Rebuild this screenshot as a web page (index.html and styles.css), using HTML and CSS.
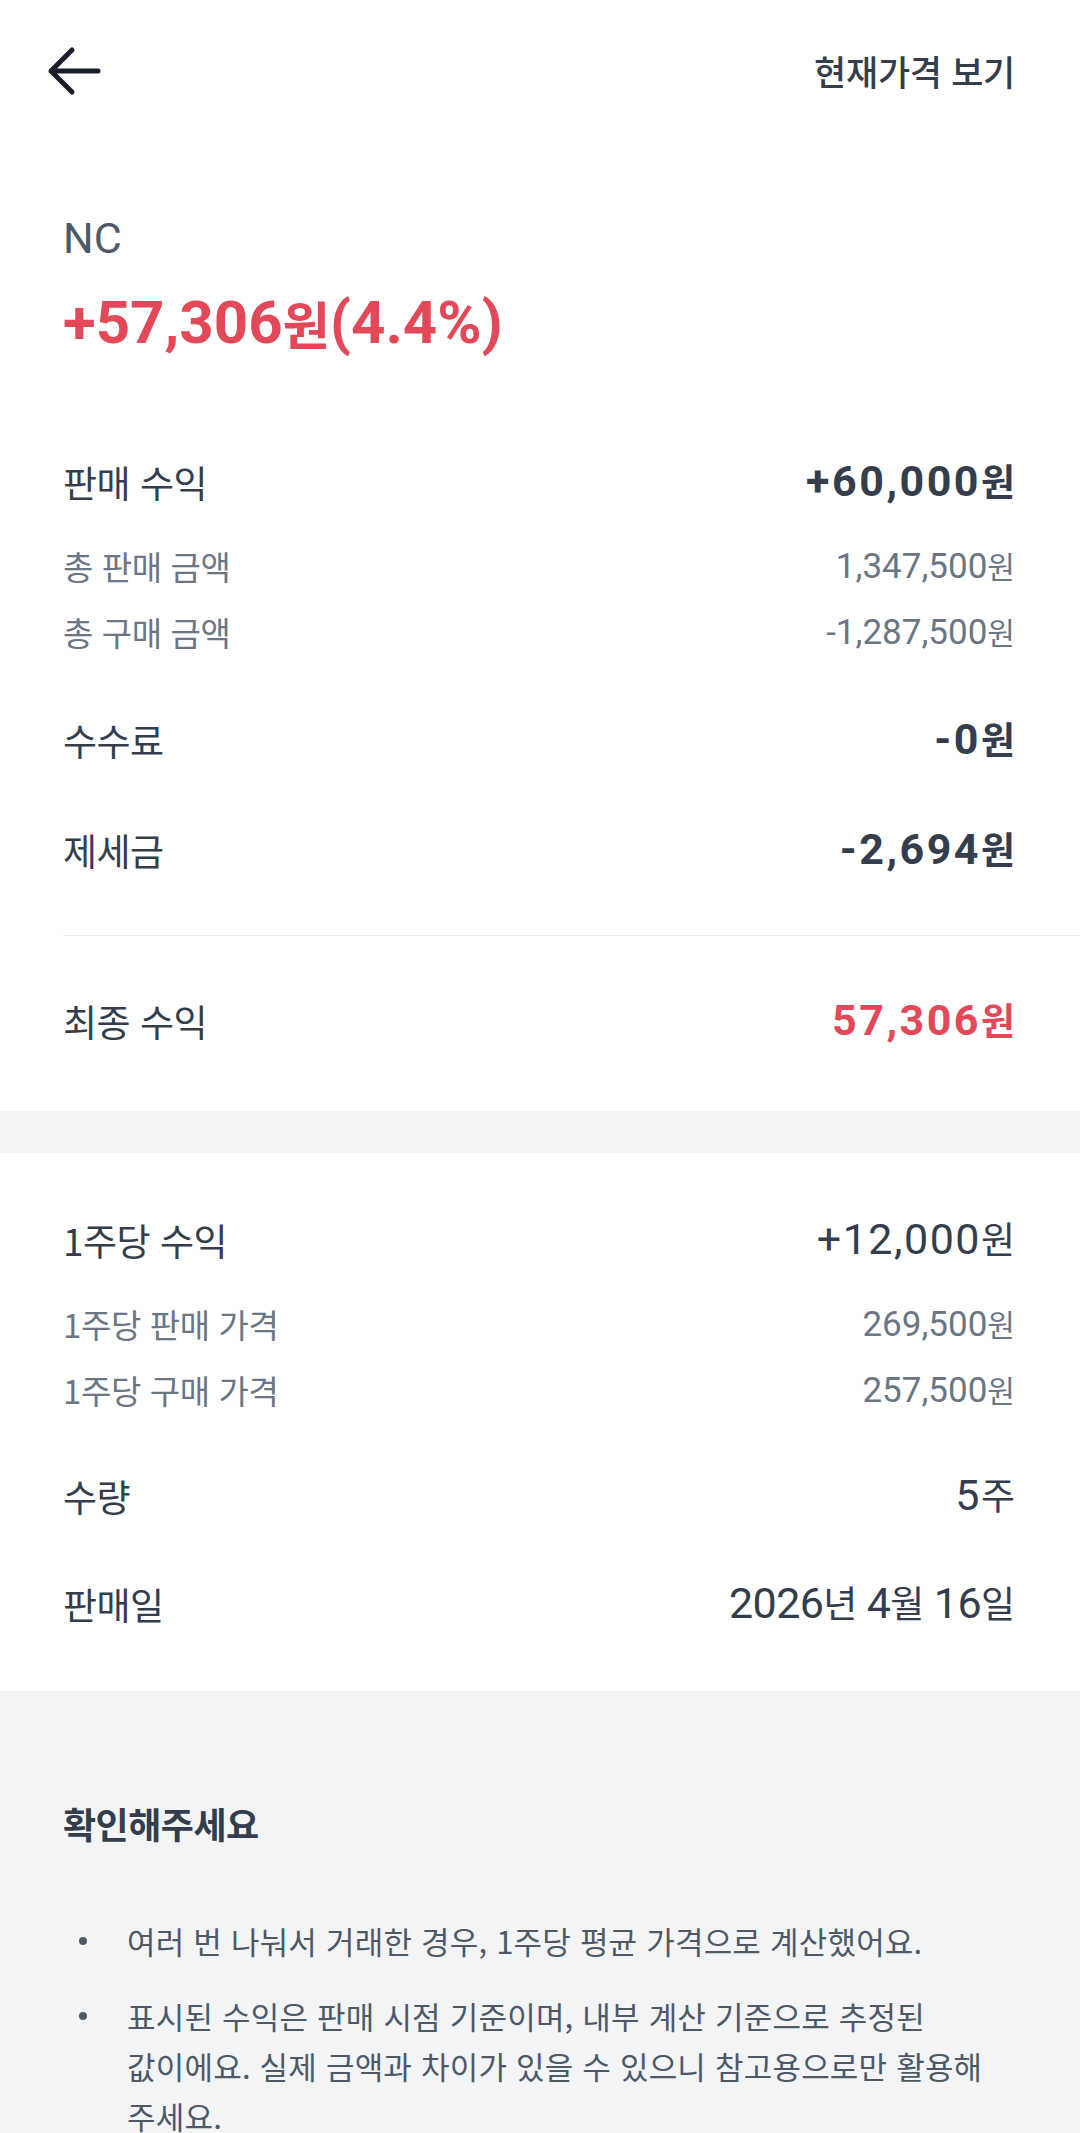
FILE: index.html
```html
<!DOCTYPE html>
<html lang="ko">
<head>
<meta charset="utf-8">
<title>판매 수익</title>
<link rel="stylesheet" href="styles.css">
</head>
<body>
<div class="page">
  <header class="topbar">
    <button class="back" type="button" aria-label="뒤로 가기">
      <svg width="60" height="60" viewBox="0 0 60 60" aria-hidden="true">
        <path d="M54 30H7M28 9L7 30l21 21" fill="none" stroke="#191f28" stroke-width="5" stroke-linecap="round" stroke-linejoin="round"/>
      </svg>
    </button>
    <span class="topbar-link">현재가격 보기</span>
  </header>

  <section class="summary">
    <div class="stock-name">NC</div>
    <div class="total-profit">+57,306<span class="unit">원</span>(4.4%)</div>
  </section>

  <section class="card">
    <div class="group">
      <div class="row row--main">
        <span class="label">판매 수익</span>
        <span class="value value--strong">+60,000<span class="unit">원</span></span>
      </div>
      <div class="subrows">
        <div class="row row--sub">
          <span class="label">총 판매 금액</span>
          <span class="value">1,347,500<span class="unit">원</span></span>
        </div>
        <div class="row row--sub">
          <span class="label">총 구매 금액</span>
          <span class="value">-1,287,500<span class="unit">원</span></span>
        </div>
      </div>
    </div>
    <div class="row row--main">
      <span class="label">수수료</span>
      <span class="value value--strong">-0<span class="unit">원</span></span>
    </div>
    <div class="row row--main">
      <span class="label">제세금</span>
      <span class="value value--strong">-2,694<span class="unit">원</span></span>
    </div>
    <div class="divider"></div>
    <div class="row row--main">
      <span class="label">최종 수익</span>
      <span class="value value--strong value--red">57,306<span class="unit">원</span></span>
    </div>
  </section>

  <section class="card card--second">
    <div class="group">
      <div class="row row--main">
        <span class="label">1주당 수익</span>
        <span class="value">+12,000<span class="unit">원</span></span>
      </div>
      <div class="subrows">
        <div class="row row--sub">
          <span class="label">1주당 판매 가격</span>
          <span class="value">269,500<span class="unit">원</span></span>
        </div>
        <div class="row row--sub">
          <span class="label">1주당 구매 가격</span>
          <span class="value">257,500<span class="unit">원</span></span>
        </div>
      </div>
    </div>
    <div class="row row--main">
      <span class="label">수량</span>
      <span class="value">5<span class="unit">주</span></span>
    </div>
    <div class="row row--main">
      <span class="label">판매일</span>
      <span class="value value--date">2026<span class="unit">년</span> 4<span class="unit">월</span> 16<span class="unit">일</span></span>
    </div>
  </section>

  <section class="notice">
    <h2 class="notice-title">확인해주세요</h2>
    <ul class="notice-list">
      <li>여러 번 나눠서 거래한 경우, 1주당 평균 가격으로 계산했어요.</li>
      <li>표시된 수익은 판매 시점 기준이며, 내부 계산 기준으로 추정된 값이에요. 실제 금액과 차이가 있을 수 있으니 참고용으로만 활용해 주세요.</li>
    </ul>
  </section>
</div>
</body>
</html>
```

FILE: styles.css
```css
* {
  box-sizing: border-box;
  margin: 0;
  padding: 0;
}

html,
body {
  background: #f2f4f6;
}

body {
  width: 1080px;
  font-family: "Noto Sans CJK KR", sans-serif;
  color: #333d4b;
}

.page {
  display: flex;
  flex-direction: column;
  min-height: 2133px;
  background: #f2f4f6;
}

/* top bar */
.topbar {
  height: 142px;
  display: flex;
  align-items: center;
  justify-content: space-between;
  padding: 0 65px 0 44px;
  background: #fff;
}

.back {
  width: 60px;
  height: 60px;
  border: 0;
  background: none;
  display: flex;
}

.topbar-link {
  font-size: 35px;
  font-weight: 500;
  letter-spacing: -0.3px;
  line-height: 50px;
  color: #333d4b;
}

/* summary */
.summary {
  background: #fff;
  padding: 71px 63px 0;
  display: flex;
  flex-direction: column;
}

.stock-name {
  height: 50px;
  display: flex;
  align-items: center;
  font-family: Roboto, "Noto Sans CJK KR", sans-serif;
  font-size: 43px;
  color: #4e5968;
}

.total-profit {
  margin-top: 24px;
  height: 70px;
  display: flex;
  align-items: center;
  white-space: nowrap;
  font-family: Roboto, "Noto Sans CJK KR", sans-serif;
  font-weight: 700;
  font-size: 60px;
  color: #e34858;
}

.unit {
  font-size: 0.86em;
}

/* cards */
.card {
  background: #fff;
  padding: 100px 65px 65px 63px;
  display: flex;
  flex-direction: column;
  gap: 60px;
}

.card--second {
  margin-top: 42px;
  padding: 62px 65px 62px 63px;
  gap: 58px;
}

.row {
  display: flex;
  justify-content: space-between;
  align-items: center;
  white-space: nowrap;
  line-height: 1.2;
}

.row--main {
  height: 50px;
}

.label {
  font-size: 37px;
  letter-spacing: -0.5px;
}

.value {
  font-family: Roboto, "Noto Sans CJK KR", sans-serif;
  font-size: 43px;
  letter-spacing: 1.5px;
}

.value .unit:last-child {
  letter-spacing: 0;
}

.value--strong {
  font-weight: 700;
  letter-spacing: 2.5px;
}

.value--red {
  color: #e34858;
}

.value--date {
  letter-spacing: -0.6px;
}

.subrows {
  margin-top: 38px;
  display: flex;
  flex-direction: column;
  gap: 22px;
}

.row--sub {
  height: 44px;
  color: #6b7684;
}

.row--sub .label {
  font-size: 33px;
  letter-spacing: -0.4px;
}

.row--sub .value {
  font-size: 35px;
  letter-spacing: 0;
}

.divider {
  height: 1px;
  background: #eceef1;
  margin-right: -65px;
}

/* notice */
.notice {
  padding: 107px 65px 0 63px;
}

.notice-title {
  font-size: 36px;
  font-weight: 700;
  letter-spacing: -0.5px;
  line-height: 50px;
  color: #333d4b;
}

.notice-list {
  list-style: none;
  margin-top: 68px;
  display: flex;
  flex-direction: column;
  gap: 25px;
}

.notice-list li {
  display: flex;
  font-size: 31px;
  letter-spacing: 0.2px;
  line-height: 50px;
  word-break: keep-all;
  color: #4e5968;
}

.notice-list li::before {
  content: "";
  flex: none;
  width: 8px;
  height: 8px;
  margin: 21px 40px 0 16px;
  border-radius: 50%;
  background: #4e5968;
}
```
